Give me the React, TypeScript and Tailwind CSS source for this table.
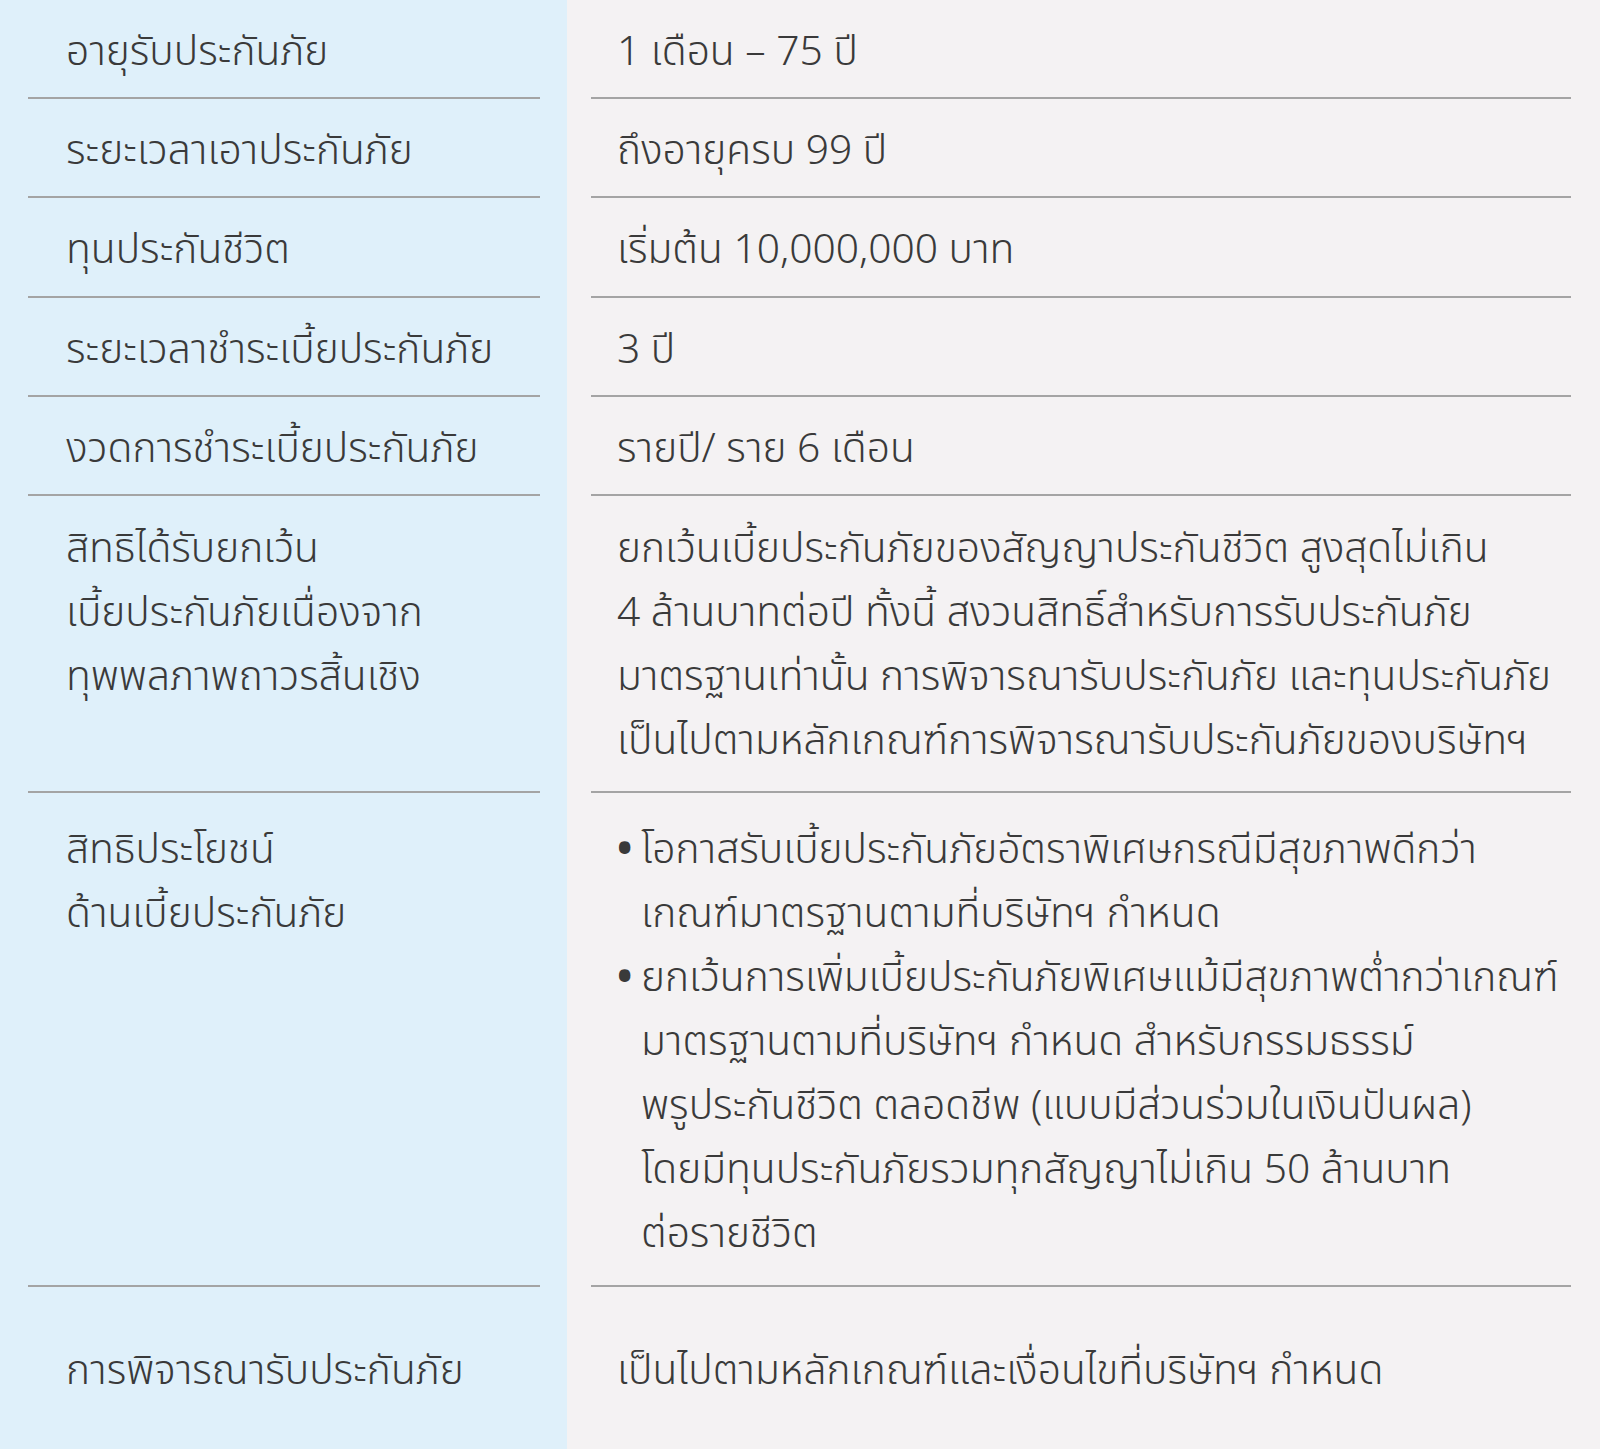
import React from "react";

const font = { fontFamily: '"Noto Sans", "Noto Sans Thai", sans-serif' };

type Row = {
  left: string[];
  right: React.ReactNode;
  cls: string;
  last?: boolean;
};

function Lines({ lines }: { lines: string[] }) {
  return (
    <div>
      {lines.map((l, i) => (
        <div key={i} className="whitespace-nowrap">
          {l}
        </div>
      ))}
    </div>
  );
}

function Bullet({ lines }: { lines: string[] }) {
  return (
    <div className="flex">
      <span className="w-[24px] shrink-0 font-bold">•</span>
      <Lines lines={lines} />
    </div>
  );
}

const rows: Row[] = [
  { left: ["อายุรับประกันภัย"], right: <Lines lines={["1 เดือน – 75 ปี"]} />, cls: "h-[99px] items-center" },
  { left: ["ระยะเวลาเอาประกันภัย"], right: <Lines lines={["ถึงอายุครบ 99 ปี"]} />, cls: "h-[99px] items-center" },
  { left: ["ทุนประกันชีวิต"], right: <Lines lines={["เริ่มต้น 10,000,000 บาท"]} />, cls: "h-[100px] items-center" },
  { left: ["ระยะเวลาชำระเบี้ยประกันภัย"], right: <Lines lines={["3 ปี"]} />, cls: "h-[99px] items-center" },
  { left: ["งวดการชำระเบี้ยประกันภัย"], right: <Lines lines={["รายปี/ ราย 6 เดือน"]} />, cls: "h-[99px] items-center" },
  {
    left: ["สิทธิได้รับยกเว้น", "เบี้ยประกันภัยเนื่องจาก", "ทุพพลภาพถาวรสิ้นเชิง"],
    right: (
      <Lines
        lines={[
          "ยกเว้นเบี้ยประกันภัยของสัญญาประกันชีวิต สูงสุดไม่เกิน",
          "4 ล้านบาทต่อปี ทั้งนี้ สงวนสิทธิ์สำหรับการรับประกันภัย",
          "มาตรฐานเท่านั้น การพิจารณารับประกันภัย และทุนประกันภัย",
          "เป็นไปตามหลักเกณฑ์การพิจารณารับประกันภัยของบริษัทฯ",
        ]}
      />
    ),
    cls: "h-[297px] items-start pt-[18px]",
  },
  {
    left: ["สิทธิประโยชน์", "ด้านเบี้ยประกันภัย"],
    right: (
      <div>
        <Bullet lines={["โอกาสรับเบี้ยประกันภัยอัตราพิเศษกรณีมีสุขภาพดีกว่า", "เกณฑ์มาตรฐานตามที่บริษัทฯ กำหนด"]} />
        <Bullet
          lines={[
            "ยกเว้นการเพิ่มเบี้ยประกันภัยพิเศษแม้มีสุขภาพต่ำกว่าเกณฑ์",
            "มาตรฐานตามที่บริษัทฯ กำหนด สำหรับกรรมธรรม์",
            "พรูประกันชีวิต ตลอดชีพ (แบบมีส่วนร่วมในเงินปันผล)",
            "โดยมีทุนประกันภัยรวมทุกสัญญาไม่เกิน 50 ล้านบาท",
            "ต่อรายชีวิต",
          ]}
        />
      </div>
    ),
    cls: "h-[494px] items-start pt-[22px]",
  },
  {
    left: ["การพิจารณารับประกันภัย"],
    right: <Lines lines={["เป็นไปตามหลักเกณฑ์และเงื่อนไขที่บริษัทฯ กำหนด"]} />,
    cls: "h-[162px] items-center",
    last: true,
  },
];

export default function App() {
  return (
    <div
      className="grid w-[1600px] grid-cols-[567px_1fr] text-[40.75px] font-light leading-[64px] text-[#3a3a3a]"
      style={font}
    >
      {rows.map((r, i) => (
        <React.Fragment key={i}>
          <div className="bg-[#dff0fa] pl-[28px] pr-[27px]">
            <div
              className={`flex pl-[38px] ${r.cls} ${r.last ? "" : "border-b-2 border-[#a4a4a4]"}`}
            >
              <Lines lines={r.left} />
            </div>
          </div>
          <div className="bg-[#f4f2f3] pl-[24px] pr-[29px]">
            <div
              className={`flex pl-[26px] ${r.cls} ${r.last ? "" : "border-b-2 border-[#a4a4a4]"}`}
            >
              {r.right}
            </div>
          </div>
        </React.Fragment>
      ))}
    </div>
  );
}
